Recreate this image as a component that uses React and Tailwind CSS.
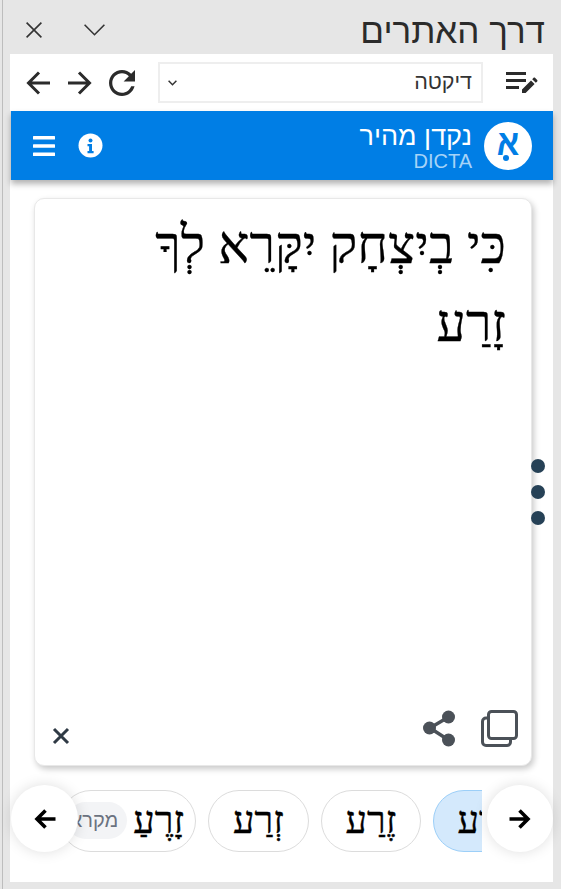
import React from "react";

const serif = "font-['Liberation_Serif',serif]";

function Chip({ children, className = "" }) {
  return (
    <div className={`h-[62px] shrink-0 rounded-full border flex items-center justify-center font-['Liberation_Serif',serif] [-webkit-text-stroke:0.4px_black] text-[38px] leading-none text-black pb-[2px] ${className}`}>
      {children}
    </div>
  );
}

function BackArrow({ className = "" }) {
  return (
    <svg width="25" height="24" viewBox="0 0 25 24" fill="none" stroke="#2b2b2b" strokeWidth="3" className={className}>
      <path d="M24 12H3M13 1.5 2.5 12 13 22.5" />
    </svg>
  );
}

function BoldArrow({ flip }) {
  return (
    <svg width="22" height="20" viewBox="0 0 22 20" fill="none" stroke="#000" strokeWidth="3.6" className={flip ? "rotate-180" : ""}>
      <path d="M21.5 10H3.5M11.5 1.5 3 10l8.5 8.5" />
    </svg>
  );
}

export default function App() {
  return (
    <div className="relative h-[889px] w-[561px] overflow-hidden bg-[#e6e6e6] font-['Liberation_Sans',sans-serif]">
      <div className="absolute left-[2px] top-0 h-[889px] w-px bg-[#bdbdbd]" />
      <div className="ml-[10px] w-[543px] flex flex-col h-[882px]">
        {/* title */}
        <div className="h-[54px] shrink-0 flex items-center justify-between pr-[8px] pl-[16px]">
          <div className="flex items-center gap-[42px] pt-[5px]">
            <svg width="16" height="16" viewBox="0 0 16 16" fill="none" stroke="#333" strokeWidth="1.6"><path d="M.6.6l14.8 14.8M15.4.6.6 15.4" /></svg>
            <svg width="21" height="12" viewBox="0 0 21 12" fill="none" stroke="#333" strokeWidth="1.6"><path d="M.6.8l9.9 9.9L20.4.8" /></svg>
          </div>
          <div dir="rtl" className="text-[35px] leading-none text-[#2b2b2b] pt-[6px]">דרך האתרים</div>
        </div>
        {/* toolbar */}
        <div className="h-[57px] shrink-0 bg-white flex items-center pl-[16px]">
          <BackArrow />
          <BackArrow className="ml-[16px] rotate-180" />
          <svg width="26" height="26" viewBox="4 4 16 16" fill="#2b2b2b" className="ml-[17px]">
            <path d="M17.65 6.35C16.2 4.9 14.21 4 12 4c-4.42 0-7.99 3.58-7.99 8s3.57 8 7.99 8c3.73 0 6.84-2.55 7.73-6h-2.08c-.82 2.33-3.04 4-5.65 4-3.31 0-6-2.69-6-6s2.69-6 6-6c1.66 0 3.14.69 4.22 1.78L13 11h7V4l-2.35 2.35z" />
          </svg>
          <div className="ml-[23px] w-[325px] h-[41px] border-2 border-[#eeeeee] flex items-center justify-between pl-[8px] pr-[9px]">
            <svg width="9" height="6" viewBox="0 0 9 6" fill="none" stroke="#333" strokeWidth="1.5"><path d="M.6.8l3.9 3.9L8.4.8" /></svg>
            <span dir="rtl" className="text-[21.5px] text-[#333]">דיקטה</span>
          </div>
          <svg className="ml-[23px]" width="32" height="24" viewBox="0 0 32 24" fill="#2b2b2b">
            <rect x="0" y="1" width="20" height="3" />
            <rect x="0" y="8" width="20" height="3" />
            <rect x="0" y="15" width="13" height="3" />
            <path d="M16 22v-3.6l9-9 3.6 3.6-9 9zM26.2 8.2l1.4-1.4c.4-.4 1-.4 1.4 0l2.2 2.2c.4.4.4 1 0 1.4l-1.4 1.4z" />
          </svg>
        </div>
        {/* blue bar */}
        <div className="ml-px h-[69px] shrink-0 bg-[#007ee5] flex items-center justify-between pl-[22px] pr-[21px] shadow-[0_4px_6px_rgba(0,0,0,0.3)] relative z-10">
          <div className="flex items-center gap-[23px]">
            <svg width="22" height="20" viewBox="0 0 22 20" fill="white">
              <rect y="0" width="22" height="3.6" rx="0.5" />
              <rect y="8.2" width="22" height="3.6" rx="0.5" />
              <rect y="16.4" width="22" height="3.6" rx="0.5" />
            </svg>
            <svg width="25" height="25" viewBox="0 0 25 25">
              <circle cx="12.5" cy="12.5" r="12" fill="white" />
              <circle cx="12.5" cy="7.5" r="2" fill="#007ee5" />
              <path d="M9.5 11h4.5v7h1.6v2.2H9.5V18h1.6v-4.8H9.5z" fill="#007ee5" />
            </svg>
          </div>
          <div className="flex items-center gap-[12px]">
            <div dir="rtl" className="flex flex-col items-start pt-px">
              <div className="text-[27px] leading-[30px] text-white">נקדן מהיר</div>
              <div className="text-[20px] leading-[20px] text-[#a6d3f7]">DICTA</div>
            </div>
            <div className="w-[48px] h-[48px] rounded-full bg-white flex items-center justify-center relative">
              <span className="font-bold text-[33px] leading-none text-[#007ee5] -mt-[6px] scale-y-110">א</span>
              <span className="absolute left-[19px] top-[33px] w-[6px] h-[6px] rounded-full bg-[#007ee5]" />
            </div>
          </div>
        </div>
        {/* body */}
        <div className="relative flex-1 bg-white min-h-0 flex flex-col pt-[18px]">
          <div className="ml-[24px] w-[498px] h-[568px] shrink-0 bg-white rounded-[10px] border border-[#e8e8e8] shadow-[2px_3px_6px_rgba(0,0,0,0.22)] flex flex-col">
            <div dir="rtl" className={`flex-1 pl-[60px] pr-[25px] pt-[8px] ${serif} [-webkit-text-stroke:0.3px_black] text-[52px] leading-[78px] text-black`}>
              כִּי בְיִצְחָק יִקָּרֵא לְךָ זָרַע
            </div>
            <div className="flex items-end justify-between pl-[17px] pr-[13px] pb-[18px]">
              <svg width="18" height="18" viewBox="0 0 18 18" className="mb-[2px]" stroke="#2f3a45" strokeWidth="3" fill="none"><path d="M2 2l14 14M16 2 2 16" /></svg>
              <div className="flex items-center gap-[25px]">
                <svg width="33" height="37" viewBox="0 0 33 37" fill="#4b5158">
                  <circle cx="25.5" cy="7" r="6.5" />
                  <circle cx="6.5" cy="18" r="6.5" />
                  <circle cx="25.5" cy="30" r="6.5" />
                  <path d="M7 18 25.5 7M7 18l18.5 12" stroke="#4b5158" strokeWidth="3.5" fill="none" />
                </svg>
                <svg width="37" height="37" viewBox="0 0 37 37" fill="none" stroke="#4b5158" strokeWidth="3">
                  <rect x="7.5" y="1.5" width="28" height="27" rx="3" />
                  <path d="M7 8H5c-2 0-3.500 1.500-3.500 3.500V32c0 2 1.500 3.500 3.500 3.500h21c2 0 3.500-1.500 3.500-3.500v-3" />
                </svg>
              </div>
            </div>
          </div>
          {/* dots */}
          <div className="absolute left-[521px] top-[279px] flex flex-col gap-[12px] z-20">
            <div className="w-[14px] h-[14px] rounded-full bg-[#264156]" />
            <div className="w-[14px] h-[14px] rounded-full bg-[#264156]" />
            <div className="w-[14px] h-[14px] rounded-full bg-[#264156]" />
          </div>
          {/* chips */}
          <div className="relative mt-[24px]">
            <div className="ml-[50px] w-[422px] overflow-hidden">
              <div className="flex items-center gap-[12px] w-[520px]">
                <Chip className="w-[136px] border-[#dcdcdc] gap-[6px] justify-end pr-[11px] pt-0">
                  <span dir="rtl" className="h-[37px] w-[60px] shrink-0 rounded-full bg-[#f3f4f6] overflow-hidden text-[20px] font-['Liberation_Sans',sans-serif] [-webkit-text-stroke:0] text-[#6b7280] flex items-center pr-[9px] whitespace-nowrap">מקרא</span>
                  <span dir="rtl">זָרֶעַ</span>
                </Chip>
                <Chip className="w-[101px] border-[#dcdcdc]"><span dir="rtl">זְרַע</span></Chip>
                <Chip className="w-[100px] border-[#dcdcdc]"><span dir="rtl">זֶרַע</span></Chip>
                <Chip className="w-[100px] bg-[#d4e9fc] border-[#9ccff8]"><span dir="rtl">זֶרַע</span></Chip>
              </div>
            </div>
            <div className="absolute left-[1px] -top-[5px] w-[67px] h-[67px] rounded-full bg-white shadow-[0_0_14px_rgba(0,0,0,0.13)] flex items-center justify-center z-10">
              <BoldArrow />
            </div>
            <div className="absolute left-[477px] -top-[5px] w-[66px] h-[67px] rounded-full bg-white shadow-[0_0_14px_rgba(0,0,0,0.13)] flex items-center justify-center z-10">
              <BoldArrow flip />
            </div>
          </div>
        </div>
      </div>
    </div>
  );
}
